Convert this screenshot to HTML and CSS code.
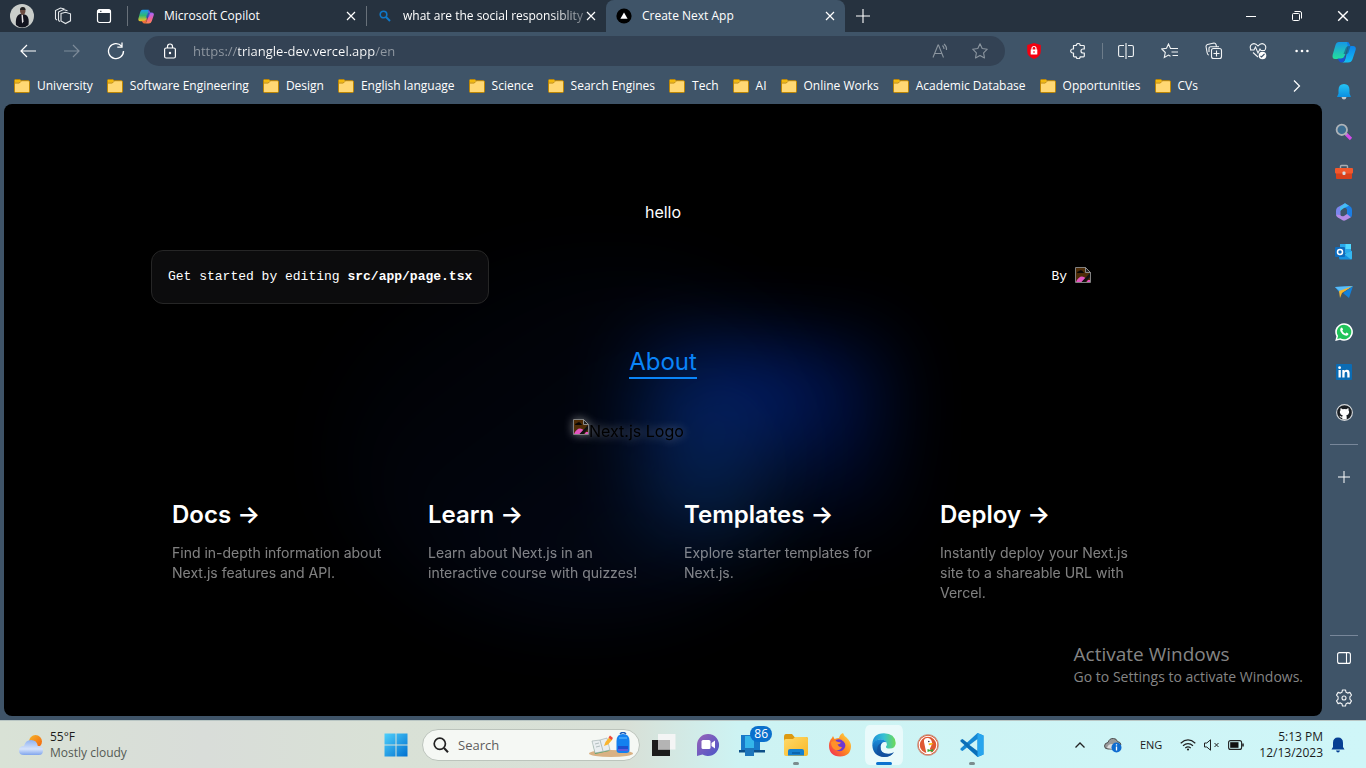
FILE: index.html
```html
<!DOCTYPE html>
<html lang="en">
<head>
<meta charset="utf-8">
<title>Create Next App</title>
<link rel="stylesheet" href="styles.css">
</head>
<body>
<svg class="defs" width="0" height="0" aria-hidden="true">
  <defs>
    <linearGradient id="cpA" x1="0" y1="0" x2="0" y2="1"><stop offset="0" stop-color="#1a9af0"/><stop offset=".5" stop-color="#2eb872"/><stop offset="1" stop-color="#f6c524"/></linearGradient>
    <linearGradient id="cpB" x1="0" y1="0" x2="0" y2="1"><stop offset="0" stop-color="#2a56d8"/><stop offset=".3" stop-color="#b565ee"/><stop offset=".65" stop-color="#f0609a"/><stop offset="1" stop-color="#ff8a4a"/></linearGradient>
    <linearGradient id="cpC" x1="0" y1="0" x2="1" y2="1"><stop offset="0" stop-color="#1b8fe8"/><stop offset="1" stop-color="#1d50c8"/></linearGradient>
    <linearGradient id="cpD" x1="0" y1="0" x2="0" y2="1"><stop offset="0" stop-color="#1597e6"/><stop offset=".5" stop-color="#20b9c0"/><stop offset="1" stop-color="#22e09a"/></linearGradient>
    <linearGradient id="cpE" x1="0" y1="0" x2="0" y2="1"><stop offset="0" stop-color="#0c74e8"/><stop offset="1" stop-color="#12bff5"/></linearGradient>
    <linearGradient id="sky" x1="0" y1="0" x2="0" y2="1"><stop offset="0" stop-color="#25c4f5"/><stop offset="1" stop-color="#0a8ee0"/></linearGradient>
    <linearGradient id="win" x1="0" y1="0" x2="1" y2="1"><stop offset="0" stop-color="#4fd0fb"/><stop offset="1" stop-color="#0070d0"/></linearGradient>
    <linearGradient id="cloud" x1="0" y1="0" x2="0" y2="1"><stop offset="0" stop-color="#8fb2f2"/><stop offset=".6" stop-color="#d6e3fb"/><stop offset="1" stop-color="#7fa4ec"/></linearGradient>
    <linearGradient id="sun" x1="0" y1="0" x2="1" y2="1"><stop offset="0" stop-color="#f5b52a"/><stop offset="1" stop-color="#f4600c"/></linearGradient>
    <linearGradient id="chat" x1="0" y1="0" x2="1" y2="1"><stop offset="0" stop-color="#9a63b8"/><stop offset="1" stop-color="#4a55c8"/></linearGradient>
    <linearGradient id="fold" x1="0" y1="0" x2="1" y2="1"><stop offset="0" stop-color="#ffd968"/><stop offset="1" stop-color="#f8b828"/></linearGradient>
    <linearGradient id="edgeTop" x1="0" y1="0" x2="1" y2="0"><stop offset="0" stop-color="#1f8fd8"/><stop offset=".5" stop-color="#35c1d4"/><stop offset="1" stop-color="#6edb55"/></linearGradient>
    <linearGradient id="edgeBot" x1="0" y1="0" x2="0" y2="1"><stop offset="0" stop-color="#1a8ddc"/><stop offset="1" stop-color="#0d4a98"/></linearGradient>
    <linearGradient id="fox" x1="1" y1="0" x2="0" y2="1"><stop offset="0" stop-color="#ffe04a"/><stop offset=".5" stop-color="#ff8a20"/><stop offset="1" stop-color="#f0205c"/></linearGradient>
    <symbol id="folder" viewBox="0 0 16 14"><path d="M.5 1.6q0-1.1 1.1-1.1h4.2l1.3 1.2h7.3q1.1 0 1.1 1.1v9.600q0 1.100-1.100 1.100H1.600Q.5 13.500.5 12.400z" fill="#ffd874" stroke="#bd8604"/><path d="M1 3.500V1.600Q1 1 1.600 1h4.200l.9 1-1.500 1.500z" fill="#f2b90f"/><path d="M1 4h4.300L7 2.300" fill="none" stroke="#bd8604"/></symbol>
    <symbol id="x" viewBox="0 0 10 10"><path d="M1 1l8 8M9 1L1 9" stroke="currentColor" stroke-width="1.200"/></symbol>
    <symbol id="broken" viewBox="0 0 16 16"><path d="M.5.5h10l5 5v10H.5z" fill="#4e2c07" stroke="#808080"/><path d="M2 6q0-2 2-1.800Q5 2.500 7 3.500q1 .5 1 1.500 1 0 1 1z" fill="#050505"/><path d="M1 15q2.500-5.500 6-5.500 2 0 3.500 1.500L7 15z" fill="#e455c0"/><path d="M6.500 15L15 6v4l-4.500 5z" fill="#111"/><path d="M10.500.5v5h5z" fill="#222" stroke="#8a8a8a"/><path d="M11.500 15l1.500-2h2v2z" fill="#e455c0"/></symbol>
    <symbol id="copilot" viewBox="0 0 24 22"><path d="M7 1h8q2 0 1.500 2l-3.700 12Q12 18 9 18H3Q0 18 .6 14L3.500 4Q4.400 1 7 1z" fill="var(--a)"/><path d="M15 1q2 0 2.600 2l.7 2H21q3.500 0 2.600 4l-3 9Q19.500 21.500 16 21.500H9.500q3 0 4-4L16 7z" fill="var(--b)"/><path d="M5.500 17.500H9q2.500 0 3.600-2.500l1-3-.6 6q-1 3.500-3.500 3.500-1.500 0-2.500-1.500z" fill="var(--c)"/><path d="M13 9q1-4 4-4h1.500l-2 6.500q-.6 1.500-2.400 1.500H11.500z" fill="var(--hole)" opacity=".7"/></symbol>
  </defs>
</svg>

<div class="browser">
  <header class="titlebar">
    <div class="profile">
      <button class="avatar" aria-label="Profile"><svg width="24" height="24" viewBox="0 0 24 24"><circle cx="12" cy="12" r="12" fill="#c9cdca"/><path d="M6 21q-1-8 3-10.500l3-1 4 1.500q3.500 2 2.500 10Q12 26 6 21z" fill="#12141f"/><path d="M11.500 10.500l1.300 0 .7 7-1.500 2z" fill="#e8e4e8"/><path d="M10 7q0-3.500 2.800-3.500T15.500 7q-.3 3.500-2.700 4Q10.500 10.500 10 7z" fill="#6a4a40"/><path d="M10 6q0-3 2.800-3t2.700 3z" fill="#222"/></svg></button>
      <button aria-label="Workspaces"><svg width="18" height="18" viewBox="0 0 18 18" fill="none" stroke="#e3e7ea" stroke-width="1.100"><path d="M7 6.500l4.500-1.300 5 1.600v7l-5 2.700-4.500-2.500zM4.500 13.500V5l5-2.500 4 1.300M1.500 12V3.500l5-2.500 4 1M1.500 12l1.500 1M4.500 13.500l1.500 1"/></svg></button>
      <button aria-label="Tab actions"><svg width="16" height="16" viewBox="0 0 16 16"><rect x="1.500" y="1.500" width="13" height="13" rx="2" fill="none" stroke="#fff" stroke-width="1.200"/><path d="M1.500 5V3q0-1.500 1.500-1.500h10q1.500 0 1.500 1.500v2z" fill="#fff"/><path d="M4 3.300h1.500" stroke="#26323f"/></svg></button>
    </div>
    <nav class="tabs" aria-label="Tabs">
      <div class="tab"><svg class="fav full" width="16" height="15"><use href="#copilot"/></svg><a href="#">Microsoft Copilot</a><button aria-label="Close tab"><svg width="10" height="10"><use href="#x"/></svg></button></div>
      <div class="tab"><svg class="fav" width="12" height="12" viewBox="0 0 12 12" fill="none" stroke="#0f78c8" stroke-width="1.600"><circle cx="4.500" cy="4.500" r="3.300"/><path d="M7 7l4 4" stroke-width="2"/></svg><a href="#" class="long">what are the social responsiblity</a><button aria-label="Close tab"><svg width="10" height="10"><use href="#x"/></svg></button></div>
      <div class="tab active"><svg class="fav" width="16" height="16" viewBox="0 0 16 16"><circle cx="8" cy="8" r="7.600" fill="#000"/><path d="M8 4.500l3.600 6.200H4.400z" fill="#fff"/></svg><a href="#">Create Next App</a><button aria-label="Close tab"><svg width="10" height="10"><use href="#x"/></svg></button></div>
      <button class="newtab" aria-label="New tab"><svg width="14" height="14" viewBox="0 0 14 14" stroke="#fff" stroke-width="1.100"><path d="M7 0v14M0 7h14"/></svg></button>
    </nav>
    <div class="winctl">
      <button aria-label="Minimize"><svg width="10" height="10" viewBox="0 0 10 10"><path d="M0 5.500h10" stroke="#fff"/></svg></button>
      <button aria-label="Restore"><svg width="10" height="10" viewBox="0 0 10 10" fill="none" stroke="#fff"><rect x=".5" y="2.500" width="7" height="7" rx="1"/><path d="M2.500.5H8Q9.500.5 9.500 2v5.500"/></svg></button>
      <button aria-label="Close"><svg width="12" height="12"><use href="#x"/></svg></button>
    </div>
  </header>

  <div class="frame">
    <div class="column">
      <div class="toolbar">
        <button aria-label="Back"><svg width="16" height="14" viewBox="0 0 16 14" fill="none" stroke="#fff" stroke-width="1.200"><path d="M16 7H1M7 1L1 7l6 6"/></svg></button>
        <button aria-label="Forward"><svg width="16" height="14" viewBox="0 0 16 14" fill="none" stroke="#7d8b99" stroke-width="1.200"><path d="M0 7h15M9 1l6 6-6 6"/></svg></button>
        <button aria-label="Refresh"><svg width="18" height="18" viewBox="0 0 18 18" fill="none" stroke="#fff" stroke-width="1.300"><path d="M16.500 9A7.500 7.500 0 1 1 14.500 4M15 .5v4.700h-4.700"/></svg></button>
        <div class="address">
          <svg width="12" height="16" viewBox="0 0 12 16" fill="none" stroke="#fff" stroke-width="1.200"><rect x=".6" y="5" width="10.800" height="10" rx="1.500"/><path d="M3.500 5V3.500a2.500 2.500 0 0 1 5 0V5"/><circle cx="6" cy="10" r=".6" fill="#fff"/></svg>
          <input aria-label="Address" value="https://triangle-dev.vercel.app/en">
          <button aria-label="Read aloud"><svg width="16" height="16" viewBox="0 0 16 16" fill="none" stroke="#8b959f" stroke-width="1.100"><path d="M1 14.500L6 2h.5l5 12.500M2.800 10.500h7M10.500 2.500q1.500 1.500 1.500 3.500M12 1q3 2.500 2.500 6"/></svg></button>
          <button aria-label="Favorite"><svg width="16" height="16" viewBox="0 0 16 16" fill="none" stroke="#8b959f" stroke-width="1.100" stroke-linejoin="round"><path d="M8 .8l2.200 4.700 5.100.7-3.700 3.600.9 5.200L8 12.500 3.500 15l.9-5.200L.7 6.200l5.100-.7z"/></svg></button>
        </div>
        <div class="tools">
          <button aria-label="Ad blocker"><svg width="16" height="18" viewBox="0 0 16 18"><path d="M8 1l6.800 2v6q0 5.500-6.800 8Q1.200 14.500 1.200 9V3z" fill="#f40010"/><rect x="4.700" y="7.500" width="6.600" height="5" fill="#fff"/><path d="M6 8V6.500a2 2 0 0 1 4 0V8" fill="none" stroke="#fff" stroke-width="1.200"/><path d="M8 9v2" stroke="#f40010"/></svg></button>
          <button aria-label="Extensions"><svg width="16" height="16" viewBox="0 0 16 16" fill="none" stroke="#f2f4f5" stroke-width="1.200" stroke-linejoin="round"><path d="M3.500 2.500h2.700a2 2 0 1 1 4 0h3.300q.8 0 .8.800v2.700h-1.300a2 2 0 1 0 0 4h1.300v3q0 .8-.8.800H10.200a2 2 0 1 1-4 0H4.300q-.8 0-.8-.8V10H2.700a2 2 0 1 1 0-4h.8z"/></svg></button>
          <span class="vline"></span>
          <button aria-label="Split screen"><svg width="16" height="16" viewBox="0 0 16 16" fill="none" stroke="#f2f4f5" stroke-width="1.100"><path d="M8 0v16M6 2.500H2q-1.400 0-1.400 1.400v8.200q0 1.400 1.400 1.400h4M10 2.500h4q1.400 0 1.400 1.400v8.200q0 1.400-1.400 1.400h-4"/></svg></button>
          <button aria-label="Favorites"><svg width="18" height="16" viewBox="0 0 18 16" fill="none" stroke="#f2f4f5" stroke-width="1.100"><path d="M12 5.500h-2.500L7.500 1 5.500 5.200.8 6l3.500 3.500-1 5 4.200-2.400 2 1.200M12 5.500h5M10.500 9H17M11.500 12.500H17"/></svg></button>
          <button aria-label="Collections"><svg width="18" height="18" viewBox="0 0 18 18" fill="none" stroke="#f2f4f5" stroke-width="1.100"><rect x="6.500" y="6.500" width="10" height="10" rx="2"/><path d="M11.500 8.500v6M8.500 11.500h6M4 13Q2.500 13 2.200 11L1 4.500Q1 3 2.500 2.500L9 1q1.500 0 2 1.500l.5 2.300M4 10V6q.3-1.200 1.500-1.200H14"/></svg></button>
          <button aria-label="Browser essentials"><svg width="18" height="18" viewBox="0 0 18 18" fill="none" stroke="#f2f4f5" stroke-width="1.100"><path d="M2 8Q0 4 3 2.200T9 4q3-3.500 6-1.800T16 8M1 8h4l1.500-3 2.500 6 2-4 1 1.500h4M4 10.500L9 15"/><circle cx="13.500" cy="13.500" r="3.800" fill="#fff" stroke="none"/><path d="M11.500 14l1 1 3-3" stroke="#3f5468"/></svg></button>
          <button aria-label="More"><svg width="14" height="4" viewBox="0 0 14 4" fill="#fff"><circle cx="1.600" cy="2" r="1.300"/><circle cx="7" cy="2" r="1.300"/><circle cx="12.400" cy="2" r="1.300"/></svg></button>
        </div>
      </div>

      <nav class="bookmarks" aria-label="Favorites bar">
        <a href="#"><svg width="16" height="14"><use href="#folder"/></svg>University</a>
        <a href="#"><svg width="16" height="14"><use href="#folder"/></svg>Software Engineering</a>
        <a href="#"><svg width="16" height="14"><use href="#folder"/></svg>Design</a>
        <a href="#"><svg width="16" height="14"><use href="#folder"/></svg>English language</a>
        <a href="#"><svg width="16" height="14"><use href="#folder"/></svg>Science</a>
        <a href="#"><svg width="16" height="14"><use href="#folder"/></svg>Search Engines</a>
        <a href="#"><svg width="16" height="14"><use href="#folder"/></svg>Tech</a>
        <a href="#"><svg width="16" height="14"><use href="#folder"/></svg>AI</a>
        <a href="#"><svg width="16" height="14"><use href="#folder"/></svg>Online Works</a>
        <a href="#"><svg width="16" height="14"><use href="#folder"/></svg>Academic Database</a>
        <a href="#"><svg width="16" height="14"><use href="#folder"/></svg>Opportunities</a>
        <a href="#"><svg width="16" height="14"><use href="#folder"/></svg>CVs</a>
        <button aria-label="More favorites"><svg width="8" height="12" viewBox="0 0 8 12" fill="none" stroke="#fff" stroke-width="1.200"><path d="M1 .5L6.500 6 1 11.500"/></svg></button>
      </nav>

      <div class="viewport">
        <main class="page">
          <p class="hello">hello</p>
          <div class="intro">
            <p class="edit">Get started by editing <b>src/app/page.tsx</b></p>
            <a class="by" href="#">By <span class="vercel"><svg width="16" height="16" role="img" aria-label="Vercel Logo"><use href="#broken"/></svg></span></a>
          </div>
          <a class="about" href="#">About</a>
          <div class="hero"><div class="logo"><svg width="16" height="16" aria-hidden="true"><use href="#broken"/></svg><span>Next.js Logo</span></div></div>
          <div class="cards">
            <a href="#"><h2>Docs <span>-&gt;</span></h2><p>Find in-depth information about Next.js features and API.</p></a>
            <a href="#"><h2>Learn <span>-&gt;</span></h2><p>Learn about Next.js in an interactive course with quizzes!</p></a>
            <a href="#"><h2>Templates <span>-&gt;</span></h2><p>Explore starter templates for Next.js.</p></a>
            <a href="#"><h2>Deploy <span>-&gt;</span></h2><p>Instantly deploy your Next.js site to a shareable URL with Vercel.</p></a>
          </div>
        </main>
        <div class="activate"><strong>Activate Windows</strong><span>Go to Settings to activate Windows.</span></div>
      </div>
    </div>

    <aside class="sidebar">
      <button aria-label="Copilot"><svg class="cool" width="24" height="22"><use href="#copilot"/></svg></button>
      <button aria-label="Notifications"><svg width="16" height="18" viewBox="0 0 16 18"><path d="M5.500 14h5q-.5 2.500-2.500 2.500T5.500 14z" fill="#c4c9cc"/><path d="M8 1q5.500 0 5.500 6v3.500l1.500 3.500H1l1.500-3.500V7Q2.500 1 8 1z" fill="url(#sky)"/></svg></button>
      <button aria-label="Search"><svg width="18" height="18" viewBox="0 0 18 18"><path d="M11 11l5 5" stroke="#d24bea" stroke-width="3.200"/><path d="M9.800 9.800l2 2" stroke="#aab" stroke-width="2"/><circle cx="6.800" cy="6.800" r="5.200" fill="#3d6e91" stroke="#aeb3b8" stroke-width="1.800"/></svg></button>
      <button aria-label="Tools"><svg width="18" height="16" viewBox="0 0 18 16"><path d="M5.500 4V2.500q0-1 1-1h5q1 0 1 1V4" fill="none" stroke="#a9adb0" stroke-width="1.400"/><rect x="1" y="8" width="16" height="7" rx="1" fill="#d8411c"/><rect x="0" y="4" width="18" height="5.500" rx="1" fill="#f2582c"/><rect x="7.500" y="7.500" width="3" height="3.500" rx="1" fill="#d5dde2"/></svg></button>
      <button aria-label="Microsoft 365"><svg width="18" height="18" viewBox="0 0 18 18"><path d="M10 .3L4 3.600Q1 5 1 8v3q0 2.500 2 3.500l2.500 1V8q0-2 2-3L12 2.500z" fill="#7a86ee"/><path d="M10 .3l5 2.900q2 1 2 3.500v5q0 1.800-1 2.600l-4-2.500V7q0-1.500-1.500-2L7 5z" fill="#1b7ee4"/><path d="M10 .3L14 2.700 9 5 5 8V4z" fill="#45bdf2"/><path d="M3 14.500l4.500 2.800q1.500.8 3 0L16 14.300 12 11l-3 2q-2 1-4-1l-3.800-.5q0 2 1.800 3z" fill="#b58be6"/></svg></button>
      <button aria-label="Outlook"><svg width="18" height="16" viewBox="0 0 18 16"><rect x="5" y="0" width="11" height="9" fill="#28a8ea"/><path d="M10.500 0H16v5h-5.500z" fill="#50d9ff"/><path d="M4 6.500l6.500 4L17 6.500V14q0 1.500-1.500 1.500h-10Q4 15.500 4 14z" fill="#1490df"/><path d="M17 7v7q0 1-1 1.500L9 10z" fill="#35b8f1"/><rect x="0" y="3" width="10" height="10" rx="1" fill="#0f6cbd"/><circle cx="5" cy="8" r="2.500" fill="none" stroke="#fff" stroke-width="1.500"/></svg></button>
      <button aria-label="Drop"><svg width="18" height="14" viewBox="0 0 18 14"><path d="M0 2L18 1 5 8z" fill="#2a9ff0"/><path d="M0 2l6 5 12-6z" fill="#59bdf9"/><path d="M4 6L18 1 7 8 5 13z" fill="#f6b62c"/><path d="M8 8L18 1l-4 12z" fill="#1382dc"/></svg></button>
      <button aria-label="WhatsApp"><svg width="18" height="18" viewBox="0 0 18 18"><path d="M9 .2a8.800 8.800 0 1 1-4 16.600L.2 18l1.200-4.600A8.800 8.800 0 0 1 9 .2z" fill="#fff"/><path d="M9 1.700a7.300 7.300 0 1 1-3.700 13.600L2.200 16l.9-3A7.300 7.300 0 0 1 9 1.700z" fill="#21c45a"/><path d="M5.800 5q1-1 1.600 0l.7 1.500-.8 1.300q1 2 3 2.900l1.200-1.100 1.700.8q.7.500-.2 1.700-1.300 1.200-3.500.2-3-1.400-4.200-4.300-.4-1.800.5-3z" fill="#fff"/></svg></button>
      <button aria-label="LinkedIn"><svg width="16" height="16" viewBox="0 0 16 16"><rect width="16" height="16" rx="1" fill="#0b6cb4"/><g fill="#fff"><rect x="2.500" y="6" width="2.300" height="7.500"/><circle cx="3.600" cy="3.700" r="1.400"/><path d="M6.300 6h2.200v1q.8-1.200 2.300-1.200 2.800 0 2.800 3.400v4.300h-2.300V9.700q0-1.900-1.300-1.900-1.400 0-1.400 1.900v3.800H6.300z"/></g></svg></button>
      <button aria-label="GitHub"><svg width="17" height="17" viewBox="0 0 17 17"><circle cx="8.500" cy="8.500" r="7.900" fill="#1b1f23" stroke="#d5d9dc" stroke-width="1.100"/><path d="M4.700 4l2 1.200q1.800-.4 3.600 0l2-1.200q.5 1.200.2 2.300.8 1 .6 2.400-.4 2.300-2.900 2.700.5.600.5 1.400v2.700H6.300v-1.800q-1.800.3-2.400-1.200l-.7-.8 1.200.2q.7 1.100 1.900.7l.5-1.200Q4.300 11 3.900 8.700q-.2-1.400.6-2.400-.3-1.100.2-2.300z" fill="#fff"/></svg></button>
      <hr>
      <button aria-label="Customize"><svg width="12" height="12" viewBox="0 0 12 12" stroke="#fff"><path d="M6 0v12M0 6h12"/></svg></button>
      <span class="grow"></span>
      <hr>
      <button aria-label="Hide sidebar"><svg width="14" height="12" viewBox="0 0 14 12" fill="none" stroke="#fff" stroke-width="1.100"><rect x=".6" y=".6" width="12.800" height="10.800" rx="2"/><path d="M9.500.5v11"/></svg></button>
      <button aria-label="Settings"><svg width="18" height="18" viewBox="0 0 18 18" fill="none" stroke="#f2f4f5" stroke-width="1.100" stroke-linejoin="round"><path d="M7.500 1h3l.6 2.300 1.500.8 2.300-.7 1.600 2.700L14.900 7.800v2.400l1.600 1.700-1.600 2.700-2.300-.7-1.500.8-.6 2.300h-3l-.6-2.300-1.500-.8-2.300.7-1.600-2.700 1.600-1.700V7.800L1.500 6.100l1.600-2.700 2.300.7 1.500-.8z"/><circle cx="9" cy="9" r="2"/></svg></button>
    </aside>
  </div>
</div>

<footer class="taskbar">
  <button class="weather"><svg width="26" height="22" viewBox="0 0 26 22"><circle cx="17.500" cy="7.500" r="6.500" fill="url(#sun)"/><path d="M6 21q-5 0-5-4.500T6 12q1.500-6 7-6 6 0 6.800 6 5.200-.5 5.200 4.500T20 21z" fill="url(#cloud)"/></svg><span>55°F<small>Mostly cloudy</small></span></button>
  <div class="apps">
    <button aria-label="Start"><svg width="24" height="24" viewBox="0 0 24 24" fill="url(#win)"><path d="M.5.500h11v11H.5zM12.500.500h11v11h-11zM.5 12.500h11v11H.5zM12.500 12.500h11v11h-11z"/></svg></button>
    <label class="search"><svg width="16" height="16" viewBox="0 0 16 16" fill="none" stroke="#222" stroke-width="1.700"><circle cx="6.800" cy="6.800" r="5.600"/><path d="M11 11l4 4.200" stroke-width="2"/></svg><input type="search" placeholder="Search" aria-label="Search"><svg width="46" height="26" viewBox="0 0 46 26"><ellipse cx="23" cy="21.500" rx="22" ry="3.500" fill="#d9b183"/><path d="M5 12l3-2 14 7-1 2-14 3z" fill="#4ea35e"/><path d="M4 9l8-1 7-2 3 12-7 1.500-8 1.500z" fill="#e9eef0" stroke="#9aa9a9" stroke-width=".6"/><path d="M12 8l3 11M7 12l4-1M8 15l4-1" stroke="#9aa9a9" stroke-width=".7"/><path d="M16 14l1.500-4 4-5 3 2.500-4.500 5z" fill="#fab530"/><path d="M20.500 5.500l1.500-2 3 2.500-1.500 2z" fill="#f04a3a"/><path d="M32 2q3-3 6 0" fill="none" stroke="#1558b8" stroke-width="1.500"/><path d="M28.500 9q0-7 6.500-7t6.500 7v9q0 3-3 3h-7q-3 0-3-3z" fill="#1380f0"/><path d="M30 14h10v5H30z" fill="#1d4fd0"/><path d="M31 6h8" stroke="#66c0ff"/><path d="M30 18h10" stroke="#a268e8"/></svg></label>
    <button aria-label="Task view"><svg width="24" height="22" viewBox="0 0 24 22"><rect x="0" y="6" width="18" height="16" fill="#1c1c1c"/><path d="M6 0h17.500v15.500H6z" fill="#f5f5f5" opacity=".95"/><path d="M6 6h12v9.500H6z" fill="#b4b4b4"/></svg></button>
    <button aria-label="Chat"><svg width="24" height="24" viewBox="0 0 24 24"><path d="M12 1a11 11 0 1 1-5.500 20.500L1 23V12A11 11 0 0 1 12 1z" fill="url(#chat)"/><rect x="5.500" y="7" width="9" height="9" rx="1.500" fill="#fff"/><path d="M15.500 10l3.500-2.500v8L15.500 13z" fill="#fff"/></svg></button>
    <button class="badged" aria-label="Phone Link"><svg width="26" height="24" viewBox="0 0 26 24"><rect x="2" y="2" width="19" height="16" fill="#1778c8"/><path d="M0 17h26v2.500H0z" fill="#0d4f88"/><path d="M6 3h9v19H6z" fill="#34b5ea"/><path d="M6 15h9v8H6z" fill="#1d75bb"/></svg><b>86</b></button>
    <button class="open" aria-label="File Explorer"><svg width="24" height="22" viewBox="0 0 24 22"><path d="M0 3q0-3 2-3h6l2.500 3H22q2 0 2 2v5H0z" fill="#dc9a12"/><path d="M0 7q0-2 2-2h7l2-2h11q2 0 2 2v15q0 2-2 2H2q-2 0-2-2z" fill="url(#fold)"/><path d="M4 21.500V17q0-2 2-2h12q2 0 2 2v4.500z" fill="#1480d0"/><path d="M8 19h8" stroke="#075ca5" stroke-width="1.500"/></svg></button>
    <button aria-label="Firefox"><svg width="24" height="24" viewBox="0 0 24 24"><path d="M15 0q1 3 3.500 4.500Q23 9 23 13q0 10-11 10.500Q1 23 1 12.500 1 8 4 5l1-2 1.500 3Q9 5 11 5q1-4 4-5z" fill="url(#fox)"/><path d="M8 7q4-2 7.500 1.500T16 16q-3 3.500-7 1.500-3-2-2.500-6z" fill="#7038d0"/><path d="M3 9q4-2 7 0 2 .3 3 .5-1 1.800-3.500 2 1.500 3 4.500 2.500-2 4-6.500 3Q3 15 3 9z" fill="#ff912a"/></svg></button>
    <button class="open current" aria-label="Microsoft Edge"><svg width="24" height="24" viewBox="0 0 24 24"><path d="M.3 12Q.3.5 12 .3 23 .5 23.700 10q0 5.500-6.200 5.500-4 0-3.500-2 1.500-1.500.5-4Q12.500 6.500 9 6.500 3 6.500.3 12z" fill="url(#edgeTop)"/><path d="M.3 12Q2 6.500 8.500 6.300q4 0 6 3-5-1.500-6 4Q8 21 17 21q2.500 0 4.800-1.500Q18.500 24 12 24 1 23.500.3 12z" fill="url(#edgeBot)"/><path d="M8.500 13Q7.500 22 18 20.500q2-.2 4-1.500-3 5-10 5-7-1-7-7 0-6 6-8-2 1-2.500 4z" fill="#11509f" opacity=".8"/></svg></button>
    <button aria-label="DuckDuckGo"><svg width="22" height="22" viewBox="0 0 22 22"><circle cx="11" cy="11" r="10.500" fill="#de5833" stroke="#c4a79b"/><circle cx="11" cy="11" r="8.800" fill="none" stroke="#fff" stroke-width="1.100"/><path d="M7 6q1-2.500 4-2 3.500.5 4 4.500-.5 4-2 6l1 5q-2 .8-4.500.3Q8 13 7 8z" fill="#fff"/><path d="M11.500 9.500q3-1 5 0-1.500 1.500-4.500 1.700z" fill="#fdb913"/><path d="M10.500 15l3 1 2.500-1v3l-2.500-1-3 1z" fill="#37a835"/><circle cx="11.800" cy="7.500" r=".8" fill="#224"/></svg></button>
    <button class="open" aria-label="Visual Studio Code"><svg width="24" height="24" viewBox="0 0 24 24"><path d="M17.500 0l6 2.500v19l-6 2.500L7 14.500 2.500 18 .5 17v-1.500L17.500 0z" fill="#1688d4"/><path d="M.5 7l2-1L18 18v6L.5 8.500z" fill="#0a6fb8"/><path d="M17.500 6v12L9.500 12z" fill="#cff4f6"/><path d="M17.500 0l6 2.500v19l-6 2.500z" fill="#27a5ee"/></svg></button>
  </div>
  <div class="tray">
    <button aria-label="Show hidden icons"><svg width="10" height="6" viewBox="0 0 10 6" fill="none" stroke="#222" stroke-width="1.300"><path d="M.5 5.500L5 1l4.500 4.500"/></svg></button>
    <button aria-label="OneDrive"><svg width="18" height="16" viewBox="0 0 18 16"><path d="M4 12q-3.500 0-3.500-3T4 5.500Q5.500 1 9.500 1.500q3 0 4 3 3 .5 3.500 3L8 12z" fill="#98999a" stroke="#444" stroke-width=".9"/><path d="M3 11q1-4 5-4l5 1-5 4z" fill="#dcdcdc"/><circle cx="12.500" cy="10.500" r="5" fill="#0f6cd0"/><path d="M12.500 9.500v4M12.500 7.200v1.300" stroke="#fff" stroke-width="1.300"/></svg></button>
    <button class="lang">ENG</button>
    <button class="status" aria-label="Network, volume and battery">
      <svg width="16" height="12" viewBox="0 0 16 12" fill="none" stroke="#222" stroke-width="1.200"><path d="M.7 4.200q7.300-6.500 14.600 0M3 6.700q5-4.200 10 0M5.300 9q2.700-2.200 5.400 0"/><circle cx="8" cy="10.500" r="1.100" fill="#222" stroke="none"/></svg>
      <svg width="16" height="12" viewBox="0 0 16 12" fill="none" stroke="#222"><path d="M.5 4h2.300L6.500.8v10.400L2.800 8H.5zM10.500 4l4 4M14.500 4l-4 4"/></svg>
      <svg width="16" height="10" viewBox="0 0 16 10"><rect x=".6" y=".6" width="13" height="8.800" rx="2" fill="none" stroke="#222" stroke-width="1.100"/><rect x="2.200" y="2.200" width="8.300" height="5.600" fill="#111"/><path d="M15 3.500v3" stroke="#222" stroke-width="1.600"/></svg>
    </button>
    <button class="clock"><time>5:13 PM</time><time>12/13/2023</time></button>
    <button aria-label="Notifications"><svg width="14" height="16" viewBox="0 0 14 16" fill="#063f93"><path d="M7 .5Q12 .5 12 6v4l1.500 2.500H.5L2 10V6Q2 .5 7 .5zM5 13.500h4q-.5 2-2 2t-2-2z"/></svg></button>
  </div>
</footer>
</body>
</html>
```

FILE: styles.css
```css
* { box-sizing: border-box; margin: 0; }

body {
  height: 100vh;
  display: flex;
  flex-direction: column;
  overflow: hidden;
  font: 12px/16px "Open Sans", "Noto Sans", sans-serif;
  color: #fff;
  background: #3f5468;
}

button {
  border: 0;
  padding: 0;
  background: none;
  color: inherit;
  font: inherit;
  display: flex;
  align-items: center;
  justify-content: center;
}

input { min-width: 0; border: 0; padding: 0; background: none; font: inherit; outline: 0; }
a { color: inherit; text-decoration: none; }
svg { display: block; flex: none; }
.defs { position: absolute; }

.browser { flex: 1; min-height: 0; display: flex; flex-direction: column; }

/* Tab strip */
.titlebar { height: 32px; flex: none; display: flex; background: #26323f; }
.profile { display: flex; width: 128px; padding-left: 1px; border-right: 1px solid; }
.profile button { width: 41px; }
.profile, .tab { border-image: linear-gradient(transparent 20%, #68717a 20% 80%, transparent 80%) 1; }
.tabs { flex: 1; display: flex; min-width: 0; }
.tab { flex: 0 1 239px; min-width: 0; display: flex; align-items: center; gap: 10px; padding: 0 10px; border-right: 1px solid; }
.tab:nth-child(2) { border: 0; padding-left: 12px; gap: 12px; }
.tab a { flex: 1; min-width: 0; white-space: nowrap; }
.tab .long { margin-right: -12px; mask-image: linear-gradient(to right, #000 80%, rgba(0, 0, 0, .3)); }
.tab.active { background: #3f5468; border: 0; border-radius: 8px 8px 0 0; }
.newtab { width: 36px; }
.winctl { display: flex; }
.winctl button { width: 46px; }
.full { --a: url(#cpA); --b: url(#cpB); --c: #f0703c; --hole: #2a50c8; }
.cool { --a: url(#cpD); --b: url(#cpE); --c: #1a52d0; --hole: #1a5f86; }

.frame { flex: 1; min-height: 0; display: flex; }
.column { flex: 1; min-width: 0; display: flex; flex-direction: column; }

/* Toolbar */
.toolbar { height: 38px; flex: none; display: flex; align-items: center; padding-left: 6px; }
.toolbar > button { width: 44px; height: 30px; }
.address { flex: 1; min-width: 0; height: 30px; margin-left: 6px; padding: 0 17px 0 20px; display: flex; align-items: center; border-radius: 15px; background: #334254; }
.address input {
  flex: 1;
  margin-left: 17px;
  font-size: 13px;
  line-height: 20px;
  color: transparent;
  background: linear-gradient(to right, #929aa3 45px, #fff 45px 182px, #929aa3 182px);
  background-clip: text;
  -webkit-background-clip: text;
}
.address button { margin-left: 24px; }
.tools { display: flex; align-items: center; padding-left: 7px; margin-right: -2px; }
.tools button { width: 44px; height: 30px; }
.vline { width: 1px; height: 16px; margin: 0 1px 0 2px; background: #6d7c8a; }

/* Favorites bar */
.bookmarks { height: 34px; flex: none; display: flex; align-items: center; gap: 14px; padding: 0 21px 2px 14px; white-space: nowrap; }
.bookmarks a { display: flex; align-items: center; gap: 7px; }
.bookmarks button { margin-left: auto; }

/* Web page */
.viewport { flex: 1; min-height: 0; margin: 0 0 4px 4px; position: relative; overflow: hidden; border-radius: 8px; background: #000; font-family: Inter, "Liberation Sans", sans-serif; }
.page { position: relative; z-index: 0; height: 100%; padding: 96px; display: flex; flex-direction: column; align-items: center; justify-content: space-between; }
.hello { font-size: 16px; line-height: 24px; }
.intro { width: 100%; max-width: 1024px; display: flex; align-items: center; justify-content: space-between; font: 13px/20px "Liberation Mono", monospace; }
.edit { padding: 16px; border: 1px solid #262626; border-radius: 12px; background: rgba(39, 39, 42, .3); }
.by { display: flex; align-items: flex-start; gap: 8px; }
.vercel { width: 100px; }
.about { margin: 17px 0 14px; font-size: 24px; line-height: 30px; color: #0a84f8; border-bottom: 2px solid #0a84f8; }
.hero { position: relative; z-index: -1; display: flex; align-items: center; width: 180px; height: 37px; }
.hero::before {
  content: "";
  position: absolute;
  width: 480px;
  height: 360px;
  transform: translateX(-50%);
  border-radius: 50%;
  background: linear-gradient(to bottom right, transparent, #1d4ed8);
  opacity: .12;
  filter: blur(40px);
}
.hero::after {
  content: "";
  position: absolute;
  z-index: -1;
  width: 240px;
  height: 180px;
  transform: translateX(30%);
  background: conic-gradient(from 180deg at 50% 50%, #0c4a6e, #0141ff, transparent);
  opacity: .4;
  filter: blur(40px);
}
.logo { position: relative; display: flex; align-items: flex-start; align-self: flex-start; color: #000; font-size: 16px; line-height: 24px; filter: drop-shadow(0 0 5px rgba(255, 255, 255, .44)); }
.cards { width: 100%; max-width: 1024px; display: grid; grid-template-columns: repeat(4, 1fr); }
.cards a { padding: 17px 21px; }
.cards h2 { margin-bottom: 12px; font-size: 24px; line-height: 32px; font-weight: 600; }
.cards p { max-width: 30ch; font-size: 14px; line-height: 20px; opacity: .5; }
.activate { position: absolute; right: 19px; bottom: 29px; display: flex; flex-direction: column; color: #858585; font: 14px/20px "Open Sans", sans-serif; }
.activate strong { font-size: 19px; line-height: 26px; font-weight: 400; }

/* Edge sidebar */
.sidebar { width: 44px; flex: none; display: flex; flex-direction: column; align-items: center; padding-bottom: 2px; }
.sidebar button { width: 40px; height: 40px; flex: none; }
.sidebar hr { width: 28px; height: 1px; border: 0; margin: 12px 0; background: #78879a; }
.sidebar .grow { flex: 1; }
.sidebar .grow + hr { margin-bottom: 2px; }

/* Taskbar */
.taskbar { height: 48px; flex: none; display: grid; grid-template-columns: 1fr auto 1fr; align-items: center; color: #1c1c1c; border-top: 1px solid #b9c6c4; background: linear-gradient(to right, #d9e2d6, #d9ddd9 15%, #d9e1d6 28%, #d8e0d7 46%, #cdf3f3 54%, #cff6f8); }
.weather { justify-self: start; gap: 6px; margin-left: 18px; text-align: left; }
.weather small { display: block; font-size: 12px; color: #545a54; }
.apps { display: flex; align-items: center; padding-left: 2px; }
.apps > button { width: 44px; height: 40px; position: relative; }
.search { width: 218px; height: 32px; margin: 0 2px 0 4px; padding: 0 5px 0 10px; display: flex; align-items: center; gap: 9px; border: 1px solid #bcc4bc; border-radius: 16px; background: #f5f8f4; }
.search input { flex: 1; font-size: 13px; color: #555; }
.search input::placeholder { color: #5d5d5d; }
.badged b { position: absolute; top: 1px; right: 2px; padding: 0 4px; border-radius: 8px; background: #0a70cc; color: #fff; font-weight: 400; }
.open::after { content: ""; position: absolute; bottom: 0; width: 6px; height: 3px; border-radius: 2px; background: #7b8c8e; }
.current { border: 3px solid transparent; border-width: 0 3px; border-radius: 7px; background: #e9fafb padding-box; }
.current::after { width: 16px; background: #0a73cf; }
.tray { justify-self: end; display: flex; align-items: center; padding-right: 21px; }
.tray > button:first-child { margin-right: 19px; }
.lang { margin-left: 18px; font-size: 11px; }
.status { gap: 8px; margin-left: 18px; }
.clock { margin: 0 8px 0 15px; flex-direction: column; align-items: flex-end; }
```
